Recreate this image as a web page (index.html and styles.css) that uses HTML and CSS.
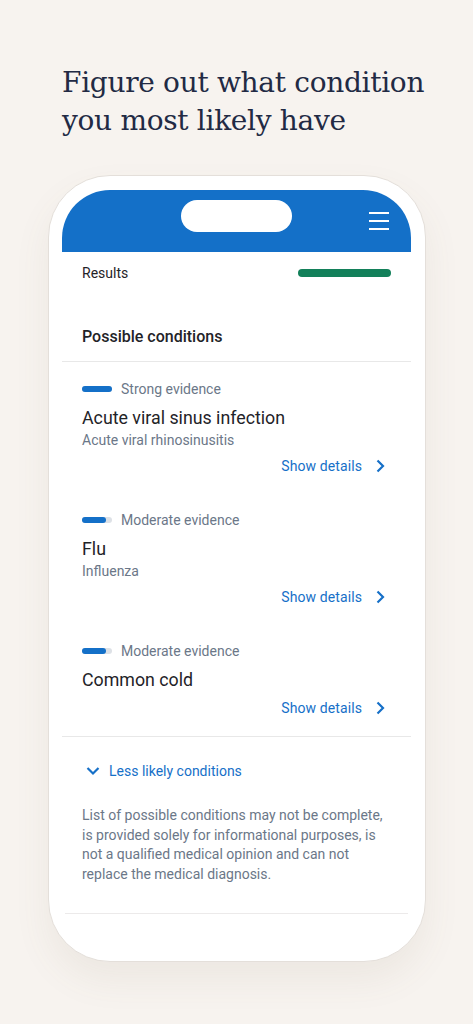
FILE: index.html
```html
<!DOCTYPE html>
<html lang="en">
<head>
<meta charset="utf-8">
<title>Results</title>
<link rel="stylesheet" href="styles.css">
</head>
<body>
<main class="page">
  <h1 class="headline">Figure out what condition you most likely have</h1>
  <div class="phone">
    <div class="screen">
      <header class="topbar">
        <div class="island"></div>
        <svg class="menu" width="20" height="18" viewBox="0 0 20 18" aria-hidden="true">
          <rect x="0" y="0" width="20" height="2" fill="#fff"/>
          <rect x="0" y="8" width="20" height="2" fill="#fff"/>
          <rect x="0" y="16" width="20" height="2" fill="#fff"/>
        </svg>
      </header>
      <div class="results-row">
        <span class="results-label">Results</span>
        <span class="progress"></span>
      </div>
      <h2 class="section-title">Possible conditions</h2>
      <div class="list">
        <div class="item">
          <div class="evidence"><span class="ebar strong"><span class="efill"></span></span><span>Strong evidence</span></div>
          <div class="cond-title">Acute viral sinus infection</div>
          <div class="cond-sub">Acute viral rhinosinusitis</div>
          <div class="details"><span>Show details</span><svg width="16" height="16" viewBox="0 0 16 16" aria-hidden="true"><path d="M5.5 2.5 L11 8 L5.5 13.5" fill="none" stroke="#1670c8" stroke-width="2.2"/></svg></div>
        </div>
        <div class="item">
          <div class="evidence"><span class="ebar moderate"><span class="efill"></span></span><span>Moderate evidence</span></div>
          <div class="cond-title">Flu</div>
          <div class="cond-sub">Influenza</div>
          <div class="details"><span>Show details</span><svg width="16" height="16" viewBox="0 0 16 16" aria-hidden="true"><path d="M5.5 2.5 L11 8 L5.5 13.5" fill="none" stroke="#1670c8" stroke-width="2.2"/></svg></div>
        </div>
        <div class="item">
          <div class="evidence"><span class="ebar moderate"><span class="efill"></span></span><span>Moderate evidence</span></div>
          <div class="cond-title">Common cold</div>
          <div class="details"><span>Show details</span><svg width="16" height="16" viewBox="0 0 16 16" aria-hidden="true"><path d="M5.5 2.5 L11 8 L5.5 13.5" fill="none" stroke="#1670c8" stroke-width="2.2"/></svg></div>
        </div>
      </div>
      <div class="less">
        <svg width="24" height="20" viewBox="0 0 24 20" aria-hidden="true"><path d="M6.5 7 L12 12.5 L17.5 7" fill="none" stroke="#1670c8" stroke-width="2.2"/></svg>
        <span>Less likely conditions</span>
      </div>
      <p class="disclaimer">List of possible conditions may not be complete, is provided solely for informational purposes, is not a qualified medical opinion and can not replace the medical diagnosis.</p>
      <div class="bottom-rule"></div>
    </div>
  </div>
</main>
</body>
</html>
```
FILE: styles.css
```css
* { box-sizing: border-box; }
html, body { margin: 0; padding: 0; }
body {
  background: #f7f3ef;
  font-family: Roboto, "Liberation Sans", sans-serif;
  width: 473px;
  height: 1024px;
  overflow: hidden;
}
.page {
  padding: 64px 0 0 62px;
}
.headline {
  margin: 0;
  font-family: "DejaVu Serif", "Liberation Serif", serif;
  font-weight: 400;
  font-size: 28px;
  line-height: 38px;
  color: #222a44;
  width: 370px;
  letter-spacing: -0.3px;
}
.phone {
  margin: 35px 0 0 -14px;
  width: 378px;
  height: 787px;
  background: #fff;
  border: 1px solid #e4dfda;
  border-radius: 62px;
  padding: 14px 14px 0 13px;
  box-shadow: 0 18px 36px rgba(120, 100, 80, 0.08);
}
.screen {
  width: 349px;
}
.topbar {
  height: 62px;
  background: #1470c8;
  border-radius: 48px 48px 0 0;
  display: flex;
  justify-content: center;
  padding-top: 10px;
  position: relative;
}
.island {
  width: 111px;
  height: 32px;
  background: #fff;
  border-radius: 16px;
}
.menu {
  position: absolute;
  right: 22px;
  top: 22px;
}
.results-row {
  height: 42px;
  display: flex;
  align-items: center;
  justify-content: space-between;
  padding: 0 20px;
}
.results-label {
  font-size: 14px;
  color: #1f2328;
}
.progress {
  width: 93px;
  height: 8px;
  background: #13805a;
  border-radius: 4px;
}
.section-title {
  margin: 31px 0 0 0;
  padding: 0 20px 12px;
  font-size: 16px;
  line-height: 24px;
  font-weight: 500;
  color: #1f2328;
  border-bottom: 1px solid #e8e8e8;
}
.list {
  padding: 17px 0 18px;
  border-bottom: 1px solid #e8e8e8;
  display: flex;
  flex-direction: column;
  gap: 34px;
}
.item {
  padding: 0 20px;
}
.evidence {
  display: flex;
  align-items: center;
  gap: 9px;
  font-size: 14px;
  line-height: 20px;
  color: #6b7788;
}
.ebar {
  width: 30px;
  height: 6px;
  border-radius: 3px;
  background: #dde1e6;
  display: flex;
}
.efill {
  height: 6px;
  border-radius: 3px;
  background: #1470c8;
}
.strong .efill { width: 30px; }
.moderate .efill { width: 24px; }
.cond-title {
  margin-top: 7px;
  font-size: 17.8px;
  line-height: 24px;
  color: #1f2328;
}
.cond-sub {
  font-size: 14px;
  line-height: 20px;
  color: #6b7788;
}
.details {
  margin-top: 6px;
  display: flex;
  justify-content: flex-end;
  align-items: center;
  gap: 10px;
  padding-right: 3px;
  font-size: 14px;
  line-height: 20px;
  letter-spacing: 0.1px;
  color: #1670c8;
}
.less {
  margin-top: 24px;
  display: flex;
  align-items: center;
  gap: 4px;
  padding-left: 19px;
  font-size: 14px;
  line-height: 20px;
  color: #1670c8;
}
.disclaimer {
  margin: 25px 0 0;
  padding: 0 20px;
  font-size: 14px;
  line-height: 19.5px;
  color: #6b7788;
}
.bottom-rule {
  margin: 29px 3px 0;
  height: 1px;
  background: #eceaea;
}
```
